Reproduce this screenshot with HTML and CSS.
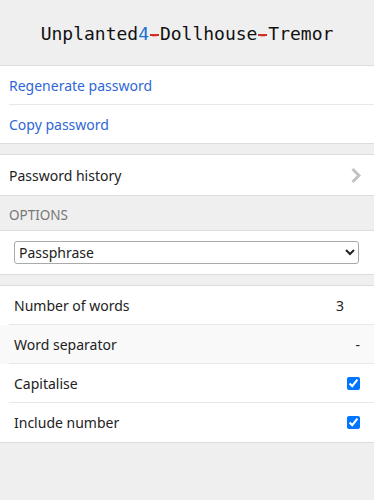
FILE: index.html
```html
<!DOCTYPE html>
<html lang="en">
<head>
    <meta charset="UTF-8">
    <meta name="viewport" content="width=device-width, initial-scale=1.0">
    <title>Generate password</title>
    <link rel="stylesheet" href="styles.css">
</head>
<body>
    <div class="generated">
        <span class="pw">Unplanted<span class="num">4</span><span class="sep">-</span>Dollhouse<span class="sep">-</span>Tremor</span>
    </div>

    <div class="box">
        <a class="row link" href="#"><span class="row-inner">Regenerate password</span></a>
        <a class="row link" href="#"><span class="row-inner">Copy password</span></a>
    </div>

    <div class="box spaced">
        <a class="row nav" href="#">
            <span class="row-inner">Password history
                <svg class="chevron" width="10" height="17" viewBox="0 0 10 17"><path d="M1.5 2l6.5 6.5-6.5 6.5" fill="none" stroke="#c2c2c2" stroke-width="3"/></svg>
            </span>
        </a>
    </div>

    <div class="box-header">Options</div>
    <div class="box select-box">
        <select id="type">
            <option value="password">Password</option>
            <option value="passphrase" selected>Passphrase</option>
        </select>
    </div>

    <div class="box spaced options">
        <div class="row"><div class="row-inner"><span>Number of words</span><span class="value num-words">3</span></div></div>
        <div class="row active"><div class="row-inner"><span>Word separator</span><span class="value">-</span></div></div>
        <div class="row"><div class="row-inner"><span>Capitalise</span><input type="checkbox" checked></div></div>
        <div class="row"><div class="row-inner"><span>Include number</span><input type="checkbox" checked></div></div>
    </div>
</body>
</html>
```

FILE: styles.css
```css
body {
    margin: 0;
    background-color: #efefef;
    font-family: "Noto Sans", "Open Sans", sans-serif;
    font-size: 14px;
    color: #222;
}
.generated {
    height: 65px;
    display: flex;
    align-items: center;
    justify-content: center;
    border-bottom: 1px solid #ddd;
}
.pw {
    font-family: "DejaVu Sans Mono", monospace;
    font-size: 18px;
    color: #111;
    padding-top: 1px;
}
.pw .num {
    color: #1a73d1;
}
/* the dash is drawn full-cell wide, like the app's mono font does */
.pw .sep {
    color: #d22f27;
    background: linear-gradient(#d22f27, #d22f27) 1px 59% / 9px 2px no-repeat;
}
.box {
    background: #fff;
    border-bottom: 1px solid #ddd;
}
.spaced {
    margin-top: 10px;
    border-top: 1px solid #ddd;
}
.row {
    display: block;
    padding-left: 9px;
    text-decoration: none;
    color: #222;
}
.row-inner {
    display: flex;
    align-items: center;
    justify-content: space-between;
    height: 38px;
    border-bottom: 1px solid #e8e8e8;
}
.row:last-child .row-inner {
    border-bottom: none;
}
.link {
    color: #2f67d6;
}
.nav .row-inner {
    height: 39px;
    padding-top: 1px;
}
.chevron {
    margin-right: 13px;
}
.box-header {
    height: 34px;
    line-height: 38px;
    padding-left: 9px;
    text-transform: uppercase;
    font-size: 13.5px;
    color: #777;
    border-bottom: 1px solid #ddd;
}
.select-box {
    padding: 10px 15px 10px 14px;
}
.select-box select {
    width: 100%;
    height: 23px;
    font-family: "Noto Sans", sans-serif;
    font-size: 14px;
    color: #222;
    border: 1px solid #aaa;
    border-radius: 3px;
    background: #fff;
    display: block;
}
.options .row-inner {
    padding-left: 5px;
    padding-right: 14px;
}
.options .row:last-child .row-inner {
    height: 39px;
}
.options .row.active {
    background: #f9f9f9;
}
.value {
    color: #222;
}
.num-words {
    margin-right: 16px;
}
.options input[type="checkbox"] {
    width: 13px;
    height: 13px;
    margin: 0;
}
```
